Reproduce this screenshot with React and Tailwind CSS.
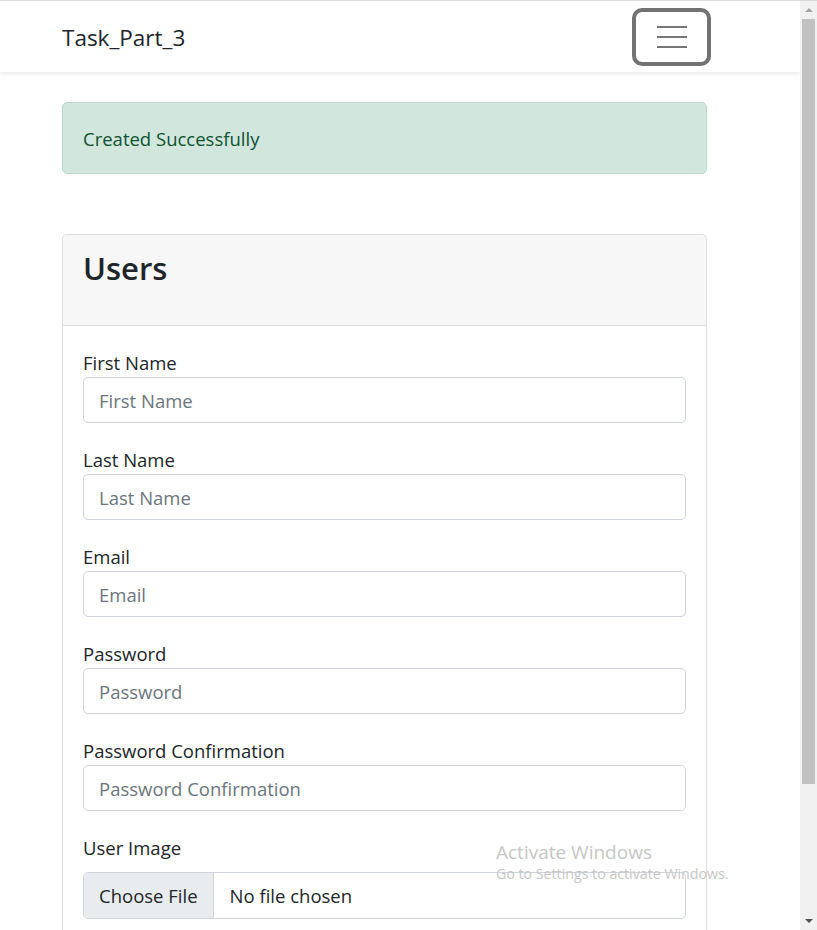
import React from 'react';

const fields = [
  { label: 'First Name', type: 'text' },
  { label: 'Last Name', type: 'text' },
  { label: 'Email', type: 'email' },
  { label: 'Password', type: 'password' },
  { label: 'Password Confirmation', type: 'password' },
];

const Field = ({ label, type }) => (
  <div className="mb-[22px]">
    <label className="block text-[18.5px] leading-[29px] text-[#212529]">{label}</label>
    <input
      type={type}
      placeholder={label}
      className="block w-full h-[46px] px-[15px] text-[18.5px] text-[#212529] placeholder:text-[#6c757d] border border-[#ced4da] rounded-[5px] outline-none bg-white"
    />
  </div>
);

const Scrollbar = () => (
  <div className="w-[17px] h-full bg-[#f1f1f1] flex flex-col items-center">
    <div className="h-[18px] flex items-center justify-center">
      <div className="w-0 h-0 border-x-[4px] border-x-transparent border-b-[4px] border-b-[#a3a3a3]" />
    </div>
    <div className="w-[13px] h-[765px] bg-[#c1c1c1]" />
    <div className="flex-1" />
    <div className="h-[18px] flex items-center justify-center">
      <div className="w-0 h-0 border-x-[4px] border-x-transparent border-t-[4px] border-t-[#505050]" />
    </div>
  </div>
);

export default function App() {
  return (
    <div className="relative flex h-[930px] w-[817px] overflow-hidden bg-white font-['Open_Sans',sans-serif] border-t border-[#dcdcdc]">
      <div className="flex-1 min-w-0">
        <nav className="h-[71px] bg-white shadow-[0_2px_4px_rgba(0,0,0,0.08)] flex items-center pl-[62px]">
          <span className="text-[22.5px] text-[#212529] leading-none mt-[4px]">Task_Part_3</span>
          <button className="ml-auto mr-[89px] w-[79px] h-[58px] border-[4px] border-[#727272] rounded-[10px] flex flex-col items-center justify-center gap-[8px]">
            <span className="block w-[30px] h-[2px] bg-[#777]" />
            <span className="block w-[30px] h-[2px] bg-[#777]" />
            <span className="block w-[30px] h-[2px] bg-[#777]" />
          </button>
        </nav>

        <div className="pl-[62px] w-[707px]">
          <div className="mt-[30px] bg-[#d1e7dd] border border-[#badbcc] rounded-[5px] px-[20px] h-[72px] flex items-center">
            <span className="text-[18.5px] text-[#0f5132] mt-[1px]">Created Successfully</span>
          </div>

          <div className="mt-[60px] border border-[#dfdfdf] rounded-[5px]">
            <div className="bg-[#f7f7f7] border-b border-[#dfdfdf] h-[91px] px-[20px] pt-[13px] rounded-t-[5px]">
              <h2 className="text-[31px] font-semibold text-[#212529] leading-[40px]">Users</h2>
            </div>
            <div className="px-[20px] pt-[22px] pb-[20px]">
              {fields.map((f) => (
                <Field key={f.label} {...f} />
              ))}
              <div>
                <label className="block text-[18.5px] leading-[29px] text-[#212529] mb-[10px]">User Image</label>
                <div className="flex h-[47px] border border-[#ced4da] rounded-[5px] overflow-hidden">
                  <span className="bg-[#e9ecef] border-r border-[#ced4da] px-[15px] flex items-center text-[18.5px] text-[#212529]">Choose File</span>
                  <span className="pl-[16px] flex items-center text-[18.5px] text-[#212529]">No file chosen</span>
                </div>
              </div>
            </div>
          </div>
        </div>
      </div>
      <Scrollbar />

      <div className="absolute left-[496px] top-[838px] pointer-events-none text-[#c6c6c6]">
        <div className="text-[19px] leading-[26px]">Activate Windows</div>
        <div className="text-[14.2px] leading-[18px]">Go to Settings to activate Windows.</div>
      </div>
    </div>
  );
}
